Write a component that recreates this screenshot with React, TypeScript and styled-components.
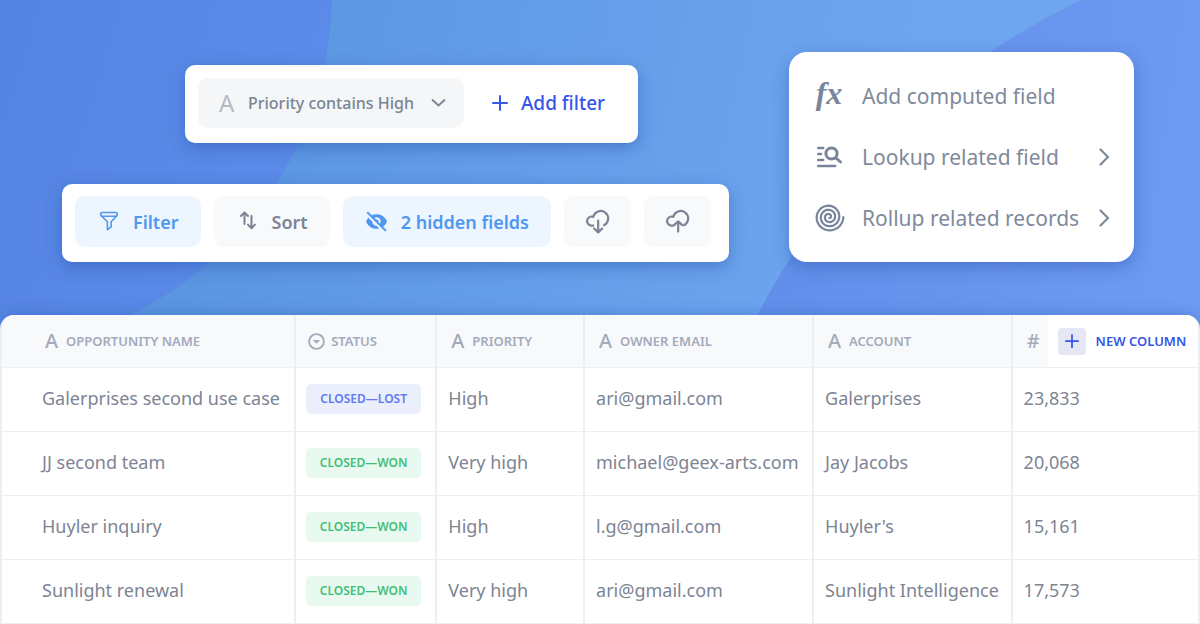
import React from "react";
import styled, { createGlobalStyle } from "styled-components";
import { BiSolidHide } from "react-icons/bi";

const GlobalStyle = createGlobalStyle`
  *, *::before, *::after { box-sizing: border-box; }
  body {
    margin: 0;
    background: #fff;
    font-family: "Noto Sans", "Open Sans", sans-serif;
  }
  button { font: inherit; border: 0; margin: 0; padding: 0; background: none; cursor: pointer; }
  svg { display: block; flex: none; }
`;

const Page = styled.main`
  position: relative;
  background: #5f9ae3;
`;

const Backdrop = styled.svg`
  position: absolute;
  inset: 0;
  width: 100%;
  height: 340px;
`;

const Hero = styled.section`
  position: relative;
  display: flex;
  justify-content: space-between;
  align-items: flex-start;
  gap: 24px;
  padding: 52px 66px 53px 62px;
`;

const Bars = styled.div`
  display: flex;
  flex-direction: column;
  align-items: flex-start;
  gap: 41px;
  padding-top: 13px;
`;

const Bar = styled.div<{ $inset?: boolean }>`
  display: flex;
  align-items: center;
  gap: 13px;
  height: 78px;
  padding: 0 18px 3px 13px;
  margin-left: ${(p) => (p.$inset ? 123 : 0)}px;
  border-radius: 10px;
  background: #fff;
  box-shadow: 0 5px 16px rgba(40, 80, 170, 0.45);
`;

const ToolButton = styled.button<{ $active?: boolean }>`
  display: flex;
  align-items: center;
  gap: 14px;
  height: 51px;
  padding: 0 22px 0 24px;
  border-radius: 10px;
  font-size: 18px;
  font-weight: 600;
  line-height: 24px;
  white-space: nowrap;
  color: ${(p) => (p.$active ? "#4f97f0" : "#7b8494")};
  background: ${(p) => (p.$active ? "#edf5fe" : "#f8f9fb")};
`;

const ToolIcon = styled.span`
  display: flex;
  justify-content: center;
  width: 20px;
`;

const IconButton = styled(ToolButton)`
  justify-content: center;
  width: 67px;
  padding: 0;
`;

const FilterChip = styled.button`
  display: flex;
  align-items: center;
  height: 50px;
  padding: 0 18px 0 21px;
  border-radius: 10px;
  background: #f4f6f8;
  color: #7b8494;
  font-size: 16px;
  font-weight: 500;
  line-height: 24px;
  white-space: nowrap;
  svg { margin-left: 17px; }
`;

const ChipType = styled.span`
  width: 29px;
  text-align: left;
  font-size: 24px;
  font-weight: 400;
  color: #b3b9c4;
`;

const AddFilter = styled.button`
  display: flex;
  align-items: center;
  gap: 13px;
  padding: 0 15px;
  color: #3555ec;
  font-size: 19px;
  font-weight: 500;
  line-height: 24px;
  white-space: nowrap;
`;

const Menu = styled.ul`
  list-style: none;
  width: 345px;
  margin: 0;
  padding: 13px 0 14px;
  border-radius: 18px;
  background: #fff;
  box-shadow: 0 5px 16px rgba(40, 80, 170, 0.45);
`;

const MenuItem = styled.button`
  display: flex;
  align-items: center;
  width: 100%;
  height: 61px;
  padding: 0 24px;
  color: #7f8a9b;
  font-size: 21px;
  line-height: 28px;
  white-space: nowrap;
`;

const MenuIcon = styled.span`
  display: flex;
  justify-content: center;
  align-items: center;
  width: 32px;
  margin-right: 17px;
  color: #78859a;
`;

const Fx = styled.span`
  padding-bottom: 5px;
  font-family: "Liberation Serif", serif;
  font-size: 32px;
  font-style: italic;
  font-weight: 700;
`;

const MenuLabel = styled.span`
  flex: 1;
  text-align: left;
`;

const SheetShade = styled.div`
  position: relative;
  border-radius: 14px 14px 0 0;
  box-shadow: 0 0 14px rgba(40, 80, 170, 0.4);
`;

const Sheet = styled.section`
  overflow: hidden;
  border: solid #eceef6;
  border-width: 0 2px;
  border-radius: 14px 14px 0 0;
  background: #fff;
`;

const Table = styled.table`
  width: 100%;
  table-layout: fixed;
  border-collapse: separate;
  border-spacing: 0;
`;

const HeadCell = styled.th<{ $first?: boolean; $last?: boolean }>`
  height: 53px;
  padding: 0 0 0 ${(p) => (p.$first ? 41 : 12)}px;
  border-bottom: 1px solid #eceef6;
  border-right: ${(p) => (p.$last ? 0 : 2)}px solid #eceef6;
  background: #f8f9fb;
  text-align: left;
`;

const HeadContent = styled.div`
  display: flex;
  align-items: center;
  height: 52px;
  color: #a3aabb;
  font-size: 13px;
  font-weight: 600;
  line-height: 20px;
  white-space: nowrap;
`;

const TypeMark = styled.span`
  display: flex;
  justify-content: center;
  width: 17px;
  margin-right: 6px;
  font-size: 20px;
  font-weight: 500;
`;

const NewColumn = styled.button`
  display: flex;
  flex: 1;
  align-items: center;
  gap: 10px;
  height: 52px;
  padding: 0 10px;
  background: #fff;
  color: #3555ec;
  font-size: 13px;
  font-weight: 600;
`;

const PlusTile = styled.span`
  display: grid;
  place-items: center;
  width: 28px;
  height: 27px;
  border-radius: 4px;
  background: #e5e7f5;
`;

const Cell = styled.td<{ $first?: boolean; $last?: boolean; $tag?: boolean }>`
  height: 64px;
  padding: 0 0 ${(p) => (p.$tag ? 1 : 3)}px ${(p) => (p.$first ? 40 : p.$tag ? 10 : 11)}px;
  border-bottom: 1px solid #eceef6;
  border-right: ${(p) => (p.$last ? 0 : 2)}px solid #eceef6;
  color: #7d8494;
  font-size: 18px;
  line-height: 24px;
  white-space: nowrap;
`;

const Tag = styled.span<{ $won: boolean }>`
  display: flex;
  align-items: center;
  justify-content: center;
  width: 115px;
  height: 30px;
  border-radius: 5px;
  font-size: 12px;
  font-weight: 600;
  line-height: 16px;
  color: ${(p) => (p.$won ? "#3fc078" : "#6079f2")};
  background: ${(p) => (p.$won ? "#e8faf0" : "#ebeffc")};
`;

type StrokeProps = { w: number; h: number; width: number; d: string; size?: number };

const Stroke = ({ w, h, width, d, size }: StrokeProps) => (
  <svg
    width={size ?? w}
    height={size ?? h}
    viewBox={`0 0 ${w} ${h}`}
    fill="none"
    stroke="currentColor"
    strokeWidth={width}
    strokeLinecap="round"
    strokeLinejoin="round"
    aria-hidden="true"
  >
    <path d={d} />
  </svg>
);

const FunnelIcon = () => (
  <Stroke w={20} h={22} width={1.6} d="M3 1.5h14a1.2 1.2 0 0 1 1.2 1.2v1.6l-6 6.4v5.2l-3.8 2.8v-8l-6.6-6.4v-1.6A1.2 1.2 0 0 1 3 1.5zM2.4 5.2h15.4" />
);
const SortIcon = () => (
  <Stroke w={20} h={21} width={2} d="M6.5 13V1.500M3 5l3.500-3.600L10 5M13.500 5v12M10 13.600l3.500 3.600 3.500-3.600" />
);
const PlusIcon = ({ size = 16 }: { size?: number }) => <Stroke w={16} h={16} size={size} width={2} d="M8 1v14M1 8h14" />;
const ChevronDown = () => <Stroke w={15} h={10} width={1.8} d="M1.5 2l6 5.500 6-5.500" />;
const ChevronRight = () => <Stroke w={11} h={18} width={2.2} d="M1.5 1.5L9 9l-7.5 7.5" />;

const CLOUD = "M8 17.2H6.9A4.7 4.7 0 1 1 8.2 8.2A7.8 7.8 0 1 1 19.400 16.800";
const CloudDown = () => <Stroke w={25} h={26} size={25} width={2.3} d={`${CLOUD}M13.200 12v12.200M9 20.300l4.200 4 4.200-4`} />;
const CloudUp = () => <Stroke w={25} h={26} size={25} width={2.3} d={`${CLOUD}M13.200 23.500V12.800M9 16.800l4.200-4 4.200 4`} />;

const LookupIcon = () => (
  <svg width="28" height="24" viewBox="0 0 28 24" fill="none" stroke="currentColor" strokeWidth="2.5" strokeLinecap="round" aria-hidden="true">
    <path d="M3.2 3h5M3.2 9h2.800M3.2 15h5M3.2 21h17" />
    <circle cx="16.500" cy="8.500" r="5.600" strokeWidth="3" />
    <path d="M21 13l4.500 4" strokeWidth="3" />
  </svg>
);

const spiralPoints = Array.from({ length: 121 }, (_, i) => {
  const angle = (i / 120) * Math.PI * 2 * 3.2;
  const radius = 14.4 - angle * 0.66;
  return `${(15 + radius * Math.cos(angle)).toFixed(2)},${(14 + radius * Math.sin(angle)).toFixed(2)}`;
}).join(" ");

const SpiralIcon = () => (
  <svg width="31" height="29" viewBox="0 0 31 29" fill="none" stroke="currentColor" strokeWidth="2.2" strokeLinecap="round" aria-hidden="true">
    <polyline points={spiralPoints} />
  </svg>
);

const SelectIcon = () => (
  <svg width="17" height="17" viewBox="0 0 17 17" aria-hidden="true">
    <circle cx="8.5" cy="8.5" r="7.4" fill="none" stroke="currentColor" strokeWidth="1.9" />
    <path d="M4.800 6.900h7.400L8.500 10.700z" fill="currentColor" />
  </svg>
);

type Kind = "text" | "select";
const columns: { label: string; kind: Kind; width: string }[] = [
  { label: "OPPORTUNITY NAME", kind: "text", width: "24.6%" },
  { label: "STATUS", kind: "select", width: "11.8%" },
  { label: "PRIORITY", kind: "text", width: "12.35%" },
  { label: "OWNER EMAIL", kind: "text", width: "19.15%" },
  { label: "ACCOUNT", kind: "text", width: "16.6%" },
];

const rows = [
  { name: "Galerprises second use case", status: "CLOSED—LOST", priority: "High", email: "ari@gmail.com", account: "Galerprises", amount: "23,833" },
  { name: "JJ second team", status: "CLOSED—WON", priority: "Very high", email: "michael@geex-arts.com", account: "Jay Jacobs", amount: "20,068" },
  { name: "Huyler inquiry", status: "CLOSED—WON", priority: "High", email: "l.g@gmail.com", account: "Huyler's", amount: "15,161" },
  { name: "Sunlight renewal", status: "CLOSED—WON", priority: "Very high", email: "ari@gmail.com", account: "Sunlight Intelligence", amount: "17,573" },
];

const menuItems = [
  { label: "Add computed field", icon: <Fx aria-hidden="true">fx</Fx>, more: false },
  { label: "Lookup related field", icon: <LookupIcon />, more: true },
  { label: "Rollup related records", icon: <SpiralIcon />, more: true },
];

export default function App() {
  return (
    <Page>
      <GlobalStyle />
      <Backdrop viewBox="0 0 1200 340" preserveAspectRatio="none" aria-hidden="true">
        <defs>
          <linearGradient id="mid" gradientUnits="userSpaceOnUse" x1="200" y1="100" x2="900" y2="250">
            <stop offset="0" stopColor="#5a95e0" />
            <stop offset="1" stopColor="#6fa6f0" />
          </linearGradient>
          <linearGradient id="left" gradientUnits="userSpaceOnUse" x1="0" y1="0" x2="320" y2="100">
            <stop offset="0" stopColor="#5583e2" />
            <stop offset="1" stopColor="#5b8be8" />
          </linearGradient>
          <linearGradient id="right" gradientUnits="userSpaceOnUse" x1="800" y1="200" x2="1200" y2="260">
            <stop offset="0" stopColor="#628fea" />
            <stop offset="1" stopColor="#6e9af2" />
          </linearGradient>
        </defs>
        <rect width="1200" height="340" fill="url(#mid)" />
        <circle cx="-29" cy="-9" r="361" fill="url(#left)" />
        <circle cx="1391" cy="642" r="713" fill="url(#right)" />
      </Backdrop>

      <Hero>
        <Bars>
          <Bar $inset>
            <FilterChip>
              <ChipType>A</ChipType>
              Priority contains High
              <ChevronDown />
            </FilterChip>
            <AddFilter><PlusIcon />Add filter</AddFilter>
          </Bar>
          <Bar>
            <ToolButton $active><ToolIcon><FunnelIcon /></ToolIcon>Filter</ToolButton>
            <ToolButton><ToolIcon><SortIcon /></ToolIcon>Sort</ToolButton>
            <ToolButton $active><ToolIcon><BiSolidHide size={25} /></ToolIcon>2 hidden fields</ToolButton>
            <IconButton aria-label="Download"><CloudDown /></IconButton>
            <IconButton aria-label="Upload"><CloudUp /></IconButton>
          </Bar>
        </Bars>
        <Menu>
          {menuItems.map((item) => (
            <li key={item.label}>
              <MenuItem>
                <MenuIcon>{item.icon}</MenuIcon>
                <MenuLabel>{item.label}</MenuLabel>
                {item.more && <ChevronRight />}
              </MenuItem>
            </li>
          ))}
        </Menu>
      </Hero>

      <SheetShade>
        <Sheet>
          <Table>
            <colgroup>
              {columns.map((c) => <col key={c.label} width={c.width} />)}
              <col />
            </colgroup>
            <thead>
              <tr>
                {columns.map((c, i) => (
                  <HeadCell key={c.label} $first={i === 0}>
                    <HeadContent>
                      <TypeMark>{c.kind === "select" ? <SelectIcon /> : "A"}</TypeMark>
                      {c.label}
                    </HeadContent>
                  </HeadCell>
                ))}
                <HeadCell $last>
                  <HeadContent>
                    <TypeMark>#</TypeMark>
                    <NewColumn><PlusTile><PlusIcon size={14} /></PlusTile>NEW COLUMN</NewColumn>
                  </HeadContent>
                </HeadCell>
              </tr>
            </thead>
            <tbody>
              {rows.map((r) => (
                <tr key={r.name}>
                  <Cell $first>{r.name}</Cell>
                  <Cell $tag><Tag $won={r.status.endsWith("WON")}>{r.status}</Tag></Cell>
                  <Cell>{r.priority}</Cell>
                  <Cell>{r.email}</Cell>
                  <Cell>{r.account}</Cell>
                  <Cell $last>{r.amount}</Cell>
                </tr>
              ))}
            </tbody>
          </Table>
        </Sheet>
      </SheetShade>
    </Page>
  );
}
